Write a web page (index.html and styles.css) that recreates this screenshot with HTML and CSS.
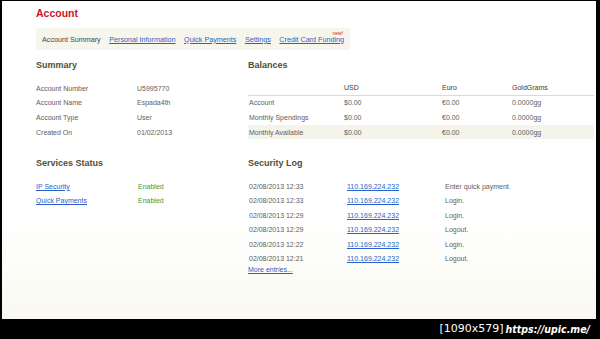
FILE: index.html
```html
<!DOCTYPE html>
<html>
<head>
<meta charset="utf-8">
<title>Account</title>
<link rel="stylesheet" href="styles.css">
</head>
<body>
<div class="frame">
  <div class="page">
    <h1 class="title">Account</h1>
    <nav class="tabs">
      <span class="tab current">Account Summary</span>
      <a class="tab" href="#">Personal Information</a>
      <a class="tab" href="#">Quick Payments</a>
      <a class="tab" href="#">Settings</a>
      <span class="tab-wrap"><a class="tab" href="#">Credit Card Funding</a><span class="new">new!</span></span>
    </nav>

    <div class="columns">
      <section class="block">
        <h2 class="heading">Summary</h2>
        <div class="kv">
          <span>Account Number</span><span>U5995770</span>
          <span>Account Name</span><span>Espada4th</span>
          <span>Account Type</span><span>User</span>
          <span>Created On</span><span>01/02/2013</span>
        </div>
      </section>

      <section class="block">
        <h2 class="heading">Balances</h2>
        <div class="balances">
          <div class="brow head"><span></span><span>USD</span><span>Euro</span><span>GoldGrams</span></div>
          <div class="brow"><span>Account</span><span>$0.00</span><span>€0.00</span><span>0.0000gg</span></div>
          <div class="brow"><span>Monthly Spendings</span><span>$0.00</span><span>€0.00</span><span>0.0000gg</span></div>
          <div class="brow alt"><span>Monthly Available</span><span>$0.00</span><span>€0.00</span><span>0.0000gg</span></div>
        </div>
      </section>

      <section class="block">
        <h2 class="heading">Services Status</h2>
        <div class="kv services">
          <a href="#">IP Security</a><span class="ok">Enabled</span>
          <a href="#">Quick Payments</a><span class="ok">Enabled</span>
        </div>
      </section>

      <section class="block">
        <h2 class="heading">Security Log</h2>
        <div class="log">
          <span>02/08/2013 12:33</span><a href="#">110.169.224.232</a><span>Enter quick payment.</span>
          <span>02/08/2013 12:33</span><a href="#">110.169.224.232</a><span>Login.</span>
          <span>02/08/2013 12:29</span><a href="#">110.169.224.232</a><span>Login.</span>
          <span>02/08/2013 12:29</span><a href="#">110.169.224.232</a><span>Logout.</span>
          <span>02/08/2013 12:22</span><a href="#">110.169.224.232</a><span>Login.</span>
          <span>02/08/2013 12:21</span><a href="#">110.169.224.232</a><span>Logout.</span>
        </div>
        <a class="more" href="#">More entries...</a>
      </section>
    </div>
  </div>
  <div class="stamp"><span class="size">[1090x579]</span><span class="url">https://upic.me/</span></div>
</div>
</body>
</html>
```

FILE: styles.css
```css
html, body {
  margin: 0;
  padding: 0;
  background: #000;
}

.frame {
  width: 600px;
  height: 339px;
  box-sizing: border-box;
  padding: 1px 4px 0 2px;
  background: #000;
  overflow: hidden;
}

.page {
  height: 318px;
  box-sizing: border-box;
  padding: 5px 2px 0 34px;
  background: linear-gradient(#ffffff 0%, #ffffff 68%, #f9f9f1 100%);
  font-family: "Liberation Sans", Arial, sans-serif;
  font-size: 7px;
  color: #5e5e5e;
}

a {
  color: #2a62c9;
  text-decoration: underline;
}

.title {
  margin: 0;
  font-size: 10.5px;
  line-height: 14px;
  font-weight: bold;
  color: #cc1424;
}

.tabs {
  margin-top: 8px;
  display: inline-flex;
  align-items: center;
  gap: 8.5px;
  height: 22px;
  padding: 0 6px;
  background: #f6f6ec;
  font-size: 7.2px;
}

.tab.current {
  color: #444;
}

.tab-wrap {
  position: relative;
}

.new {
  position: absolute;
  right: 1px;
  top: -5px;
  font-size: 5px;
  color: #d41a1a;
}

.columns {
  display: grid;
  grid-template-columns: 212px 1fr;
  row-gap: 17.6px;
  margin-top: 9px;
}

.heading {
  margin: 0 0 10px;
  font-size: 9px;
  line-height: 12px;
  font-weight: bold;
  color: #4f4f36;
}

.kv {
  display: grid;
  grid-template-columns: 101px 1fr;
  grid-auto-rows: 14.6px;
  align-items: center;
}

.services {
  grid-template-columns: 102px 1fr;
}

.ok {
  color: #3d9a3d;
}

.balances {
  display: flex;
  flex-direction: column;
}

.brow {
  display: grid;
  grid-template-columns: 95px 98px 70px 1fr;
  height: 14.6px;
  align-items: center;
}

.brow span {
  padding-left: 1px;
}

.brow.head {
  color: #3a3a3a;
  border-bottom: 1px solid #dcdcc8;
  box-sizing: border-box;
}

.brow.alt {
  background: #f4f4ea;
}

.log {
  display: grid;
  grid-template-columns: 98px 98px 1fr;
  grid-auto-rows: 14.5px;
  align-items: center;
}

.log > * {
  padding-left: 1px;
  justify-self: start;
}

.more {
  display: block;
  line-height: 8px;
  margin-top: 0;
  width: max-content;
}

.stamp {
  height: 20px;
  display: flex;
  justify-content: flex-end;
  align-items: center;
  gap: 2px;
  padding-right: 6px;
  color: #fff;
  line-height: 20px;
}

.stamp .size {
  font-family: "DejaVu Sans", sans-serif;
  font-size: 11px;
}

.stamp .url {
  font-family: "DejaVu Sans Condensed", "DejaVu Sans", sans-serif;
  font-weight: bold;
  font-style: oblique;
  font-size: 10.5px;
}
```
